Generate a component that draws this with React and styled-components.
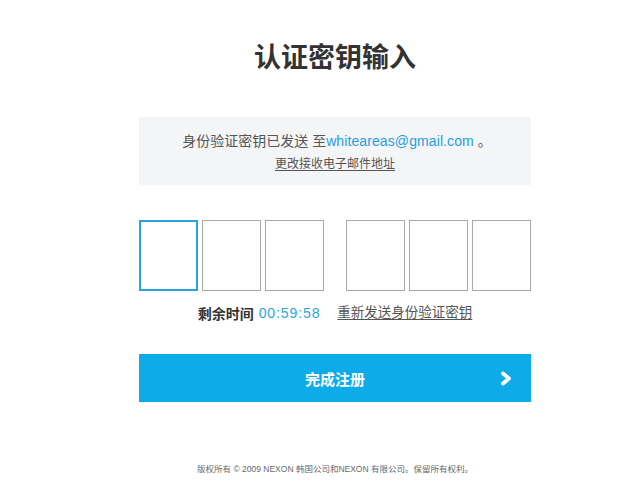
import React from "react";
import styled, { createGlobalStyle } from "styled-components";

const Global = createGlobalStyle`
  html, body { margin: 0; padding: 0; background: #fff; }
  body { font-family: "Liberation Sans", "Noto Sans CJK SC", sans-serif; }
`;

const Page = styled.div`
  width: 392px;
  margin-left: 139px;
  display: flex;
  flex-direction: column;
`;

const Title = styled.h1`
  margin: 42px 0 0;
  font-size: 27px;
  line-height: 27px;
  font-weight: 700;
  color: #333;
  text-align: center;
  font-family: "Noto Sans CJK SC", sans-serif;
`;

const Notice = styled.div`
  margin-top: 48px;
  background: #f4f5f7;
  padding: 14px 0 13px;
  display: flex;
  flex-direction: column;
  align-items: center;
`;

const NoticeLine = styled.p`
  margin: 0 0 0 4px;
  font-size: 14px;
  line-height: 20px;
  color: #555;
`;

const Email = styled.span`
  color: #1f9fe0;
  letter-spacing: 0.1px;
`;

const TextLink = styled.a`
  margin-top: ${(p) => p.$mt || 0}px;
  font-size: ${(p) => p.$size}px;
  line-height: ${(p) => p.$lh}px;
  color: #555;
  text-decoration: underline;
  text-underline-offset: 2px;
  cursor: pointer;
`;

const Codes = styled.div`
  margin-top: 35px;
  display: flex;
  gap: 22px;
`;

const CodeGroup = styled.div`
  display: flex;
  gap: 4px;
`;

const CodeBox = styled.input`
  box-sizing: border-box;
  width: 59px;
  height: 71px;
  margin: 0;
  padding: 0;
  outline: none;
  background: #fff;
  border: ${(p) => (p.$active ? "2px solid #28a3e0" : "1px solid #a9a9a9")};
  font-size: 28px;
  text-align: center;
  font-family: "Liberation Sans", sans-serif;
`;

const TimerRow = styled.div`
  margin-top: 12px;
  display: flex;
  justify-content: center;
  align-items: center;
  height: 20px;
  gap: 17px;
`;

const Remaining = styled.div`
  display: flex;
  align-items: center;
  gap: 5px;
`;

const Label = styled.span`
  font-size: 14px;
  font-weight: 700;
  color: #333;
  font-family: "Noto Sans CJK SC", sans-serif;
`;

const Time = styled.span`
  font-size: 14px;
  letter-spacing: 0.9px;
  color: #2aa6e0;
`;

const Submit = styled.button`
  margin-top: 31px;
  height: 48px;
  border: none;
  padding: 0 19px 0 0;
  background: #0eabe9;
  display: grid;
  grid-template-columns: 1fr auto 1fr;
  align-items: center;
  cursor: pointer;
`;

const SubmitText = styled.span`
  grid-column: 2;
  font-size: 15px;
  font-weight: 700;
  color: #fff;
  font-family: "Noto Sans CJK SC", sans-serif;
  padding-left: 19px;
`;

const Chevron = styled.svg`
  grid-column: 3;
  justify-self: end;
  display: block;
`;

const Footer = styled.footer`
  margin-top: 60px;
  text-align: center;
  font-size: 8.5px;
  line-height: 14px;
  color: #6a6a6a;
`;

export default function App() {
  return (
    <>
      <Global />
      <Page>
        <Title>认证密钥输入</Title>
        <Notice>
          <NoticeLine>
            身份验证密钥已发送 至<Email>whiteareas@gmail.com</Email> 。
          </NoticeLine>
          <TextLink $size={12} $lh={16} $mt={5}>更改接收电子邮件地址</TextLink>
        </Notice>
        <Codes>
          <CodeGroup>
            <CodeBox $active maxLength={1} />
            <CodeBox maxLength={1} />
            <CodeBox maxLength={1} />
          </CodeGroup>
          <CodeGroup>
            <CodeBox maxLength={1} />
            <CodeBox maxLength={1} />
            <CodeBox maxLength={1} />
          </CodeGroup>
        </Codes>
        <TimerRow>
          <Remaining>
            <Label>剩余时间</Label>
            <Time>00:59:58</Time>
          </Remaining>
          <TextLink $size={13.5} $lh={20}>重新发送身份验证密钥</TextLink>
        </TimerRow>
        <Submit>
          <SubmitText>完成注册</SubmitText>
          <Chevron width="12" height="15" viewBox="0 0 12 15">
            <path
              d="M3 2.5 L9 7.5 L3 12.5"
              fill="none"
              stroke="#fff"
              strokeWidth="3.8"
              strokeLinecap="round"
              strokeLinejoin="round"
            />
          </Chevron>
        </Submit>
        <Footer>版权所有 © 2009 NEXON 韩国公司和NEXON 有限公司。保留所有权利。</Footer>
      </Page>
    </>
  );
}
